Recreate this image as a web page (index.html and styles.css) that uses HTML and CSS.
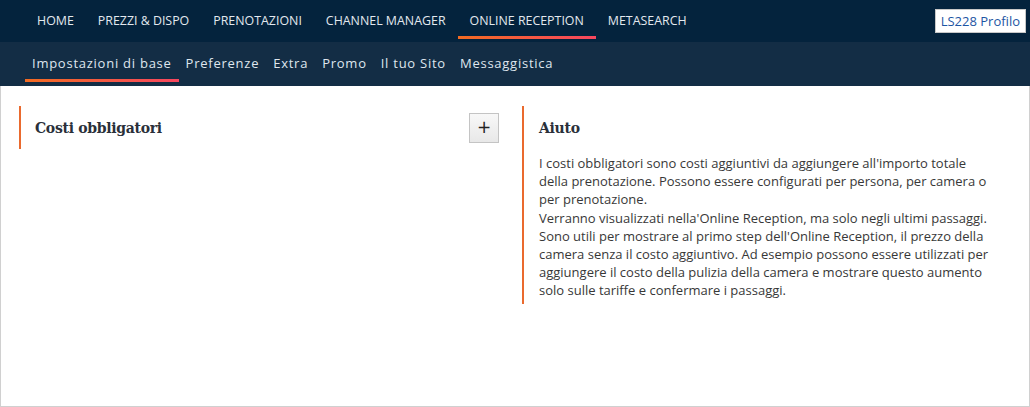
FILE: index.html
```html
<!DOCTYPE html>
<html lang="it">
<head>
<meta charset="utf-8">
<title>Online Reception - Impostazioni di base</title>
<link rel="stylesheet" href="styles.css">
</head>
<body>
<header class="topbar">
  <nav class="mainnav">
    <a class="mainnav-item">HOME</a>
    <a class="mainnav-item">PREZZI &amp; DISPO</a>
    <a class="mainnav-item">PRENOTAZIONI</a>
    <a class="mainnav-item">CHANNEL MANAGER</a>
    <a class="mainnav-item is-active">ONLINE RECEPTION</a>
    <a class="mainnav-item">METASEARCH</a>
  </nav>
  <div class="account">
    <span class="account-btn">LS228 Profilo</span>
    <span class="account-btn account-btn--cut"></span>
  </div>
</header>
<nav class="subnav">
  <a class="subnav-item is-active">Impostazioni di base</a>
  <a class="subnav-item">Preferenze</a>
  <a class="subnav-item">Extra</a>
  <a class="subnav-item">Promo</a>
  <a class="subnav-item">Il tuo Sito</a>
  <a class="subnav-item">Messaggistica</a>
</nav>
<main class="content">
  <section class="panel panel--main">
    <div class="panel-head">
      <h2 class="panel-title">Costi obbligatori</h2>
      <button class="add-btn" type="button">+</button>
    </div>
  </section>
  <aside class="panel panel--help">
    <h2 class="panel-title">Aiuto</h2>
    <p class="help-text">I costi obbligatori sono costi aggiuntivi da aggiungere all'importo totale della prenotazione. Possono essere configurati per persona, per camera o per prenotazione.<br>Verranno visualizzati nella'Online Reception, ma solo negli ultimi passaggi. Sono utili per mostrare al primo step dell'Online Reception, il prezzo della camera senza il costo aggiuntivo. Ad esempio possono essere utilizzati per aggiungere il costo della pulizia della camera e mostrare questo aumento solo sulle tariffe e confermare i passaggi.</p>
  </aside>
</main>
</body>
</html>
```
FILE: styles.css
```css
* { box-sizing: border-box; }
html, body { margin: 0; padding: 0; }
body {
  font-family: "Open Sans", "Liberation Sans", sans-serif;
  background: #ffffff;
  width: 1030px;
  height: 407px;
  overflow: hidden;
  display: flex;
  flex-direction: column;
}
.topbar {
  height: 42px;
  background: #04233d;
  display: flex;
  align-items: stretch;
  justify-content: space-between;
  padding-left: 25px;
}
.mainnav { display: flex; }
.mainnav-item {
  display: flex;
  align-items: center;
  padding: 0 12px 2px;
  color: #e3e9ef;
  font-size: 12.4px;
  position: relative;
}
.mainnav-item.is-active::after {
  content: "";
  position: absolute;
  left: 0; right: 0; bottom: 3px;
  height: 3px;
  background: linear-gradient(90deg, #f26b22, #f7475f);
}
.account { display: flex; align-items: center; gap: 4px; padding-bottom: 1px; margin-right: -8px; }
.account-btn {
  display: block;
  height: 24px;
  line-height: 22px;
  padding: 0 5px;
  background: #ffffff;
  border: 1px solid #c8c8c8;
  color: #1d55a3;
  font-size: 13px;
}
.account-btn--cut { width: 8px; padding: 0; }
.subnav {
  height: 44px;
  background: #132d45;
  display: flex;
  padding-left: 25px;
}
.subnav-item {
  display: flex;
  align-items: center;
  padding: 0 7px 2px;
  color: #dfe6ee;
  font-size: 13px;
  letter-spacing: 0.75px;
  position: relative;
}
.subnav-item.is-active::after {
  content: "";
  position: absolute;
  left: 0; right: 0; bottom: 4px;
  height: 3px;
  background: linear-gradient(90deg, #f26b22, #f7475f);
}
.content {
  flex: 1;
  border: 1px solid #d0d0d0;
  border-top: 0;
  display: flex;
  align-items: flex-start;
  padding: 20px 0 0 18px;
  gap: 23px;
}
.panel {
  border-left: 2px solid #ea6a2e;
}
.panel--main { width: 480px; padding: 7px 0 6px 14px; }
.panel-head {
  display: flex;
  align-items: center;
  justify-content: space-between;
}
.panel-title {
  margin: 0;
  font-family: "DejaVu Serif", "Liberation Serif", serif;
  font-weight: bold;
  font-size: 14px;
  color: #2a303a;
  letter-spacing: -0.3px;
}
.add-btn {
  width: 30px;
  height: 30px;
  padding: 0 0 2px;
  border: 1px solid #c4c4c4;
  background: linear-gradient(#f8f8f8, #e8e8e8);
  color: #222;
  font-family: "DejaVu Sans", sans-serif;
  font-size: 17px;
  line-height: 26px;
}
.panel--help { width: 470px; padding: 14px 0 4px 15px; }
.panel--help .panel-title { margin-bottom: 18px; }
.help-text {
  margin: 0;
  font-size: 13px;
  line-height: 18.2px;
  color: #383838;
}
```
